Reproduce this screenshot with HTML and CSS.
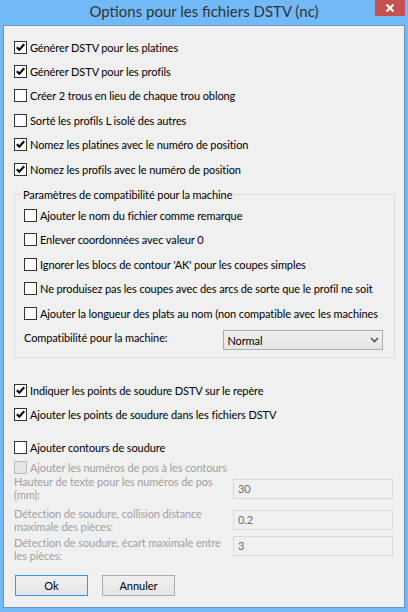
FILE: index.html
```html
<!DOCTYPE html>
<html lang="fr">
<head>
  <meta charset="UTF-8">
  <meta name="viewport" content="width=device-width, initial-scale=1.0">
  <title>Options pour les fichiers DSTV (nc)</title>
  <link rel="stylesheet" href="styles.css">
</head>

<body>
  <div class="window">
    <div class="titlebar">
      <span class="title">Options pour les fichiers DSTV (nc)</span>
      <button class="close" type="button" aria-label="Fermer">
        <svg width="10" height="10" viewBox="0 0 10 10"><path d="M1.5 1.5 L8.5 8.5 M8.5 1.5 L1.5 8.5" stroke="#fff" stroke-width="2.2"/></svg>
      </button>
    </div>

    <div class="client">
      <div class="options">
        <label class="opt"><span class="box on"><svg viewBox="0 0 11 11"><path d="M1.8 5.2 L4.3 7.8 L9.2 2.2" /></svg></span>Générer DSTV pour les platines</label>
        <label class="opt"><span class="box on"><svg viewBox="0 0 11 11"><path d="M1.8 5.2 L4.3 7.8 L9.2 2.2" /></svg></span>Générer DSTV pour les profils</label>
        <label class="opt"><span class="box"></span>Créer 2 trous en lieu de chaque trou oblong</label>
        <label class="opt"><span class="box"></span>Sorté les profils L isolé des autres</label>
        <label class="opt"><span class="box on"><svg viewBox="0 0 11 11"><path d="M1.8 5.2 L4.3 7.8 L9.2 2.2" /></svg></span>Nomez les platines avec le numéro de position</label>
        <label class="opt"><span class="box on"><svg viewBox="0 0 11 11"><path d="M1.8 5.2 L4.3 7.8 L9.2 2.2" /></svg></span>Nomez les profils avec le numéro de position</label>
      </div>

      <fieldset class="groupe">
        <legend>Paramètres de compatibilité pour la machine</legend>
        <label class="opt"><span class="box"></span>Ajouter le nom du fichier comme remarque</label>
        <label class="opt"><span class="box"></span>Enlever coordonnées avec valeur 0</label>
        <label class="opt"><span class="box"></span>Ignorer les blocs de contour 'AK' pour les coupes simples</label>
        <label class="opt"><span class="box"></span>Ne produisez pas les coupes avec des arcs de sorte que le profil ne soit</label>
        <label class="opt"><span class="box"></span>Ajouter la longueur des plats au nom (non compatible avec les machines</label>

        <div class="compat">
          <span class="compat-label">Compatibilité pour la machine:</span>
          <div class="select">
            <span>Normal</span>
            <svg width="9" height="6" viewBox="0 0 9 6"><path d="M1 1 L4.5 4.5 L8 1" fill="none" stroke="#555" stroke-width="1.6"/></svg>
          </div>
        </div>
      </fieldset>

      <div class="options soudure">
        <label class="opt"><span class="box on"><svg viewBox="0 0 11 11"><path d="M1.8 5.2 L4.3 7.8 L9.2 2.2" /></svg></span>Indiquer les points de soudure DSTV sur le repère</label>
        <label class="opt"><span class="box on"><svg viewBox="0 0 11 11"><path d="M1.8 5.2 L4.3 7.8 L9.2 2.2" /></svg></span>Ajouter les points de soudure dans les fichiers DSTV</label>
        <label class="opt espace"><span class="box"></span>Ajouter contours de soudure</label>
        <label class="opt off court"><span class="box"></span>Ajouter les numéros de pos à les contours</label>
      </div>

      <div class="champs">
        <div class="champ champ-1">
          <span class="champ-label">Hauteur de texte pour les numéros de pos<br>(mm):</span>
          <span class="input">30</span>
        </div>
        <div class="champ champ-2">
          <span class="champ-label">Détection de soudure, collision distance<br>maximale des pièces:</span>
          <span class="input">0.2</span>
        </div>
        <div class="champ champ-3">
          <span class="champ-label">Détection de soudure, écart maximale entre<br>les pièces:</span>
          <span class="input">3</span>
        </div>
      </div>

      <div class="boutons">
        <button type="button" class="btn defaut">Ok</button>
        <button type="button" class="btn">Annuler</button>
      </div>
    </div>
  </div>
</body>
</html>
```
FILE: styles.css
```css
body {
  margin: 0;
  font-family: "Lato", "Liberation Sans", sans-serif;
  font-size: 11px;
  letter-spacing: -0.1px;
  color: #000;
}

.window {
  width: 408px;
  height: 612px;
  box-sizing: border-box;
  padding: 0 3px 4px 3px;
  background: #71baf7;
  display: flex;
  flex-direction: column;
}

/* barre de titre */
.titlebar {
  position: relative;
  height: 25px;
  display: flex;
  justify-content: center;
  align-items: flex-start;
  padding-top: 1px;
  box-sizing: border-box;
}

.title {
  font-size: 15px;
  letter-spacing: 0;
  line-height: 20px;
  color: #333;
}

.close {
  position: absolute;
  top: 0;
  right: 0;
  width: 30px;
  height: 16px;
  padding: 0;
  border: none;
  background: #c75050;
  display: flex;
  align-items: center;
  justify-content: center;
}

.client {
  flex: 1;
  background: #f0f0f0;
  border: 1px solid #6a95bd;
  display: flex;
  flex-direction: column;
}

/* cases a cocher */
.options {
  padding-top: 9px;
  display: flex;
  flex-direction: column;
}

.opt {
  display: flex;
  align-items: center;
  height: 24.4px;
  padding-left: 10px;
  white-space: nowrap;
  overflow: hidden;
}

.box {
  width: 13px;
  height: 13px;
  box-sizing: border-box;
  border: 1px solid #333;
  background: #fff;
  margin-right: 3px;
  flex-shrink: 0;
}

.box svg {
  display: block;
  width: 11px;
  height: 11px;
}

.box path {
  fill: none;
  stroke: #000;
  stroke-width: 2.1;
}

.opt.off {
  color: #a0a0a0;
}

.opt.off .box {
  border-color: #bcbcbc;
  background: #e6e6e6;
}

/* groupe compatibilite */
.groupe {
  margin: 6px 9px 0 10px;
  padding: 1px 11px 7px 9px;
  border: 1px solid #dcdcdc;
  border-radius: 0;
  min-width: 0;
}

.groupe legend {
  margin-left: -3px;
  padding: 0 2px;
  line-height: 15px;
}

.groupe .opt {
  padding-left: 0;
}

.compat {
  display: flex;
  margin-top: 5px;
}

.compat-label {
  width: 200px;
  line-height: 16px;
}

.select {
  width: 160px;
  height: 20px;
  box-sizing: border-box;
  border: 1px solid #acacac;
  background: linear-gradient(#f0f0f0, #e5e5e5);
  display: flex;
  align-items: center;
  justify-content: space-between;
  padding: 0 3px 0 3px;
}

/* soudure */
.soudure {
  padding-top: 20px;
}

.soudure .opt {
  height: 24px;
}

.soudure .espace {
  margin-top: 9px;
}

.soudure .court {
  height: 16px;
}

.champs {
  padding-left: 10px;
  display: flex;
  flex-direction: column;
}

.champ {
  display: flex;
  align-items: flex-start;
  height: 26px;
}

.champ-label {
  width: 219px;
  line-height: 13px;
  color: #a0a0a0;
}

.input {
  width: 160px;
  height: 20px;
  box-sizing: border-box;
  border: 1px solid #d9d9d9;
  background: #f0f0f0;
  color: #6d6d6d;
  padding-left: 4px;
  line-height: 18px;
}

.champ-1 .input {
  margin-top: 4px;
}

.champ-2 {
  margin-top: 6px;
}

.champ-2 .input {
  margin-top: 3px;
}

.champ-3 {
  margin-top: 3px;
}

/* boutons */
.boutons {
  display: flex;
  gap: 14px;
  padding: 13px 0 0 11px;
}

.btn {
  width: 73px;
  height: 21px;
  padding: 0;
  border: 1px solid #acacac;
  background: linear-gradient(#f0f0f0, #e5e5e5);
  font-family: "Lato", "Liberation Sans", sans-serif;
  font-size: 11px;
  color: #000;
}

.btn.defaut {
  border-color: #3399ff;
}
```
